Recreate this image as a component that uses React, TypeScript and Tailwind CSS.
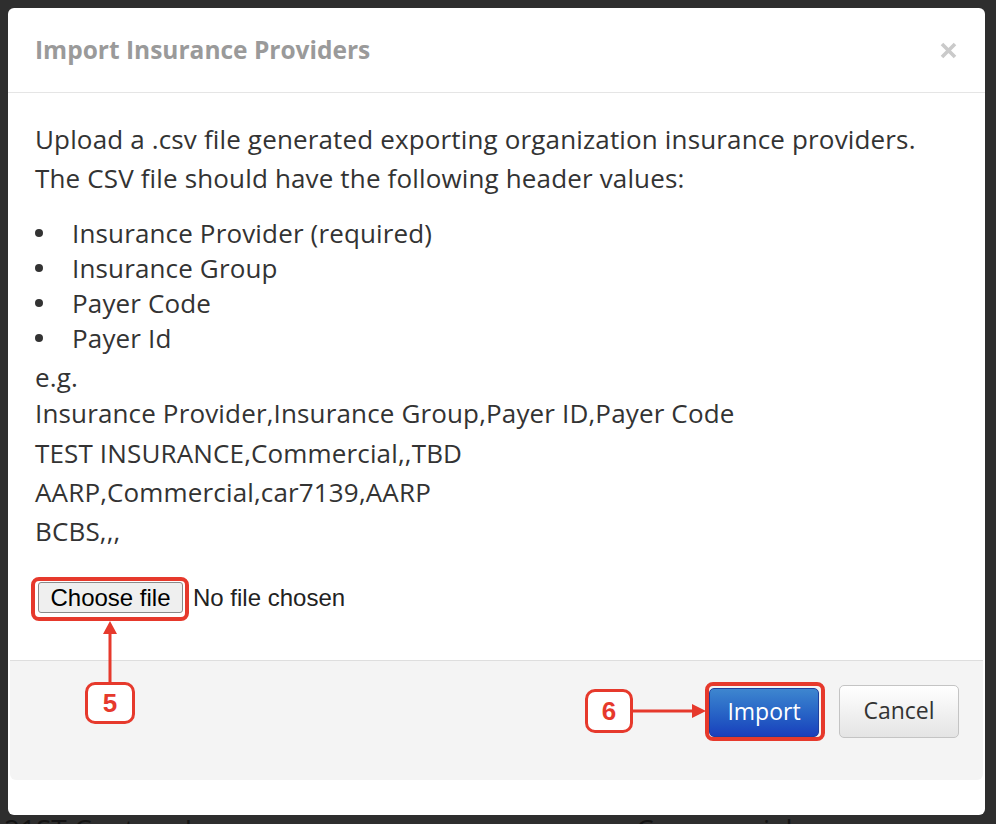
import React from 'react';

const font = { fontFamily: '"Open Sans", Lato, sans-serif' };

const headerValues = ['Insurance Provider (required)', 'Insurance Group', 'Payer Code', 'Payer Id'];
const sampleRows = [
  'Insurance Provider,Insurance Group,Payer ID,Payer Code',
  'TEST INSURANCE,Commercial,,TBD',
  'AARP,Commercial,car7139,AARP',
  'BCBS,,,',
];

const Badge = ({ n, className }: { n: string; className: string }) => (
  <div
    className={`absolute flex items-center justify-center rounded-[10px] border-[3px] border-[#e6392c] bg-white text-[26px] leading-none font-black text-[#e6392c] ${className}`}
    style={{ fontFamily: '"Liberation Sans", Arial, sans-serif' }}
  >
    {n}
  </div>
);

export default function App() {
  return (
    <div className="relative h-[824px] w-[996px] overflow-hidden bg-[#2e2e2e] pt-2" style={font}>
      {/* modal */}
      <div className="ml-2 flex h-[807px] w-[977px] flex-col rounded-[6px] bg-white">
        <div className="flex h-[85px] shrink-0 items-center justify-between border-b border-[#e5e5e5] pl-[27px] pr-[28px]">
          <h2 className="text-[24.5px] font-bold text-[#9a9a9a]">Import Insurance Providers</h2>
          <svg width="17" height="17" viewBox="0 0 17 17">
            <path d="M2 2 L15 15 M15 2 L2 15" stroke="#cacaca" strokeWidth="3.6" />
          </svg>
        </div>

        <div className="flex-1 px-[27px] pt-[28px] text-[26px] tracking-[0.15px] text-[#333]">
          <div className="h-[39px] leading-[36px]">
            Upload a .csv file generated exporting organization insurance providers.
          </div>
          <div className="h-[55px] leading-[36px]">The CSV file should have the following header values:</div>
          <div className="mb-[4px]">
            {headerValues.map((v) => (
              <div key={v} className="flex h-[35px] items-start leading-[36px]">
                <span className="flex h-[36px] w-[37px] items-center">
                  <span className="h-[8px] w-[8px] rounded-full bg-[#333]" />
                </span>
                <span>{v}</span>
              </div>
            ))}
          </div>
          <div className="h-[36px] leading-[36px]">e.g.</div>
          {sampleRows.map((r, i) => (
            <div key={i} className={`${i === 0 ? 'h-[40px]' : 'h-[39px]'} leading-[36px]`}>
              {r}
            </div>
          ))}

          <div
            className="mt-[30px] flex items-center gap-[10px] text-[24px] leading-none tracking-normal text-[#222]"
            style={{ fontFamily: '"Liberation Sans", Arial, sans-serif' }}
          >
            <div className="ml-[3px] flex h-[31px] w-[145px] items-center justify-center rounded-[3px] border border-[#8a8a8a] bg-[#efefef] text-black">
              Choose file
            </div>
            <span>No file chosen</span>
          </div>
        </div>

        <div className="mx-[2px] mb-[35px] flex h-[120px] shrink-0 items-start justify-end gap-[20px] rounded-b-[6px] border-t border-[#dedede] bg-[#f4f4f4] pr-[24px] pt-[24px] text-[23px]">
          <button className="mt-[3px] h-[49px] w-[110px] rounded-[5px] border border-[#1e3f9e] bg-gradient-to-b from-[#3e86cf] to-[#1b3fbc] pb-[3px] text-white">
            Import
          </button>
          <button className="h-[53px] w-[120px] rounded-[5px] border border-[#c4c4c4] bg-gradient-to-b from-white to-[#e4e4e4] pb-[3px] text-[#333]">
            Cancel
          </button>
        </div>
      </div>

      {/* page behind the overlay */}
      <div className="mt-[-4px] flex text-[28px] leading-[36px] text-[#141414]">
        <span className="w-[636px] pl-[4px]">21ST Century Insurance</span>
        <span>Commercial</span>
      </div>

      {/* annotations */}
      <div className="absolute left-[31px] top-[577px] h-[44px] w-[158px] rounded-[8px] border-[4px] border-[#e6392c]" />
      <div className="absolute left-[705px] top-[682px] h-[59px] w-[120px] rounded-[8px] border-[4px] border-[#e6392c]" />
      <svg className="absolute left-0 top-0" width="996" height="824">
        <line x1="110" y1="632" x2="110" y2="683" stroke="#e6392c" strokeWidth="3" />
        <polygon points="110,621 103,634 117,634" fill="#e6392c" />
        <line x1="632" y1="711" x2="694" y2="711" stroke="#e6392c" strokeWidth="3" />
        <polygon points="706,711 692,704 692,718" fill="#e6392c" />
      </svg>
      <Badge n="5" className="left-[85px] top-[682px] h-[42px] w-[50px]" />
      <Badge n="6" className="left-[585px] top-[689px] h-[44px] w-[48px]" />
    </div>
  );
}
